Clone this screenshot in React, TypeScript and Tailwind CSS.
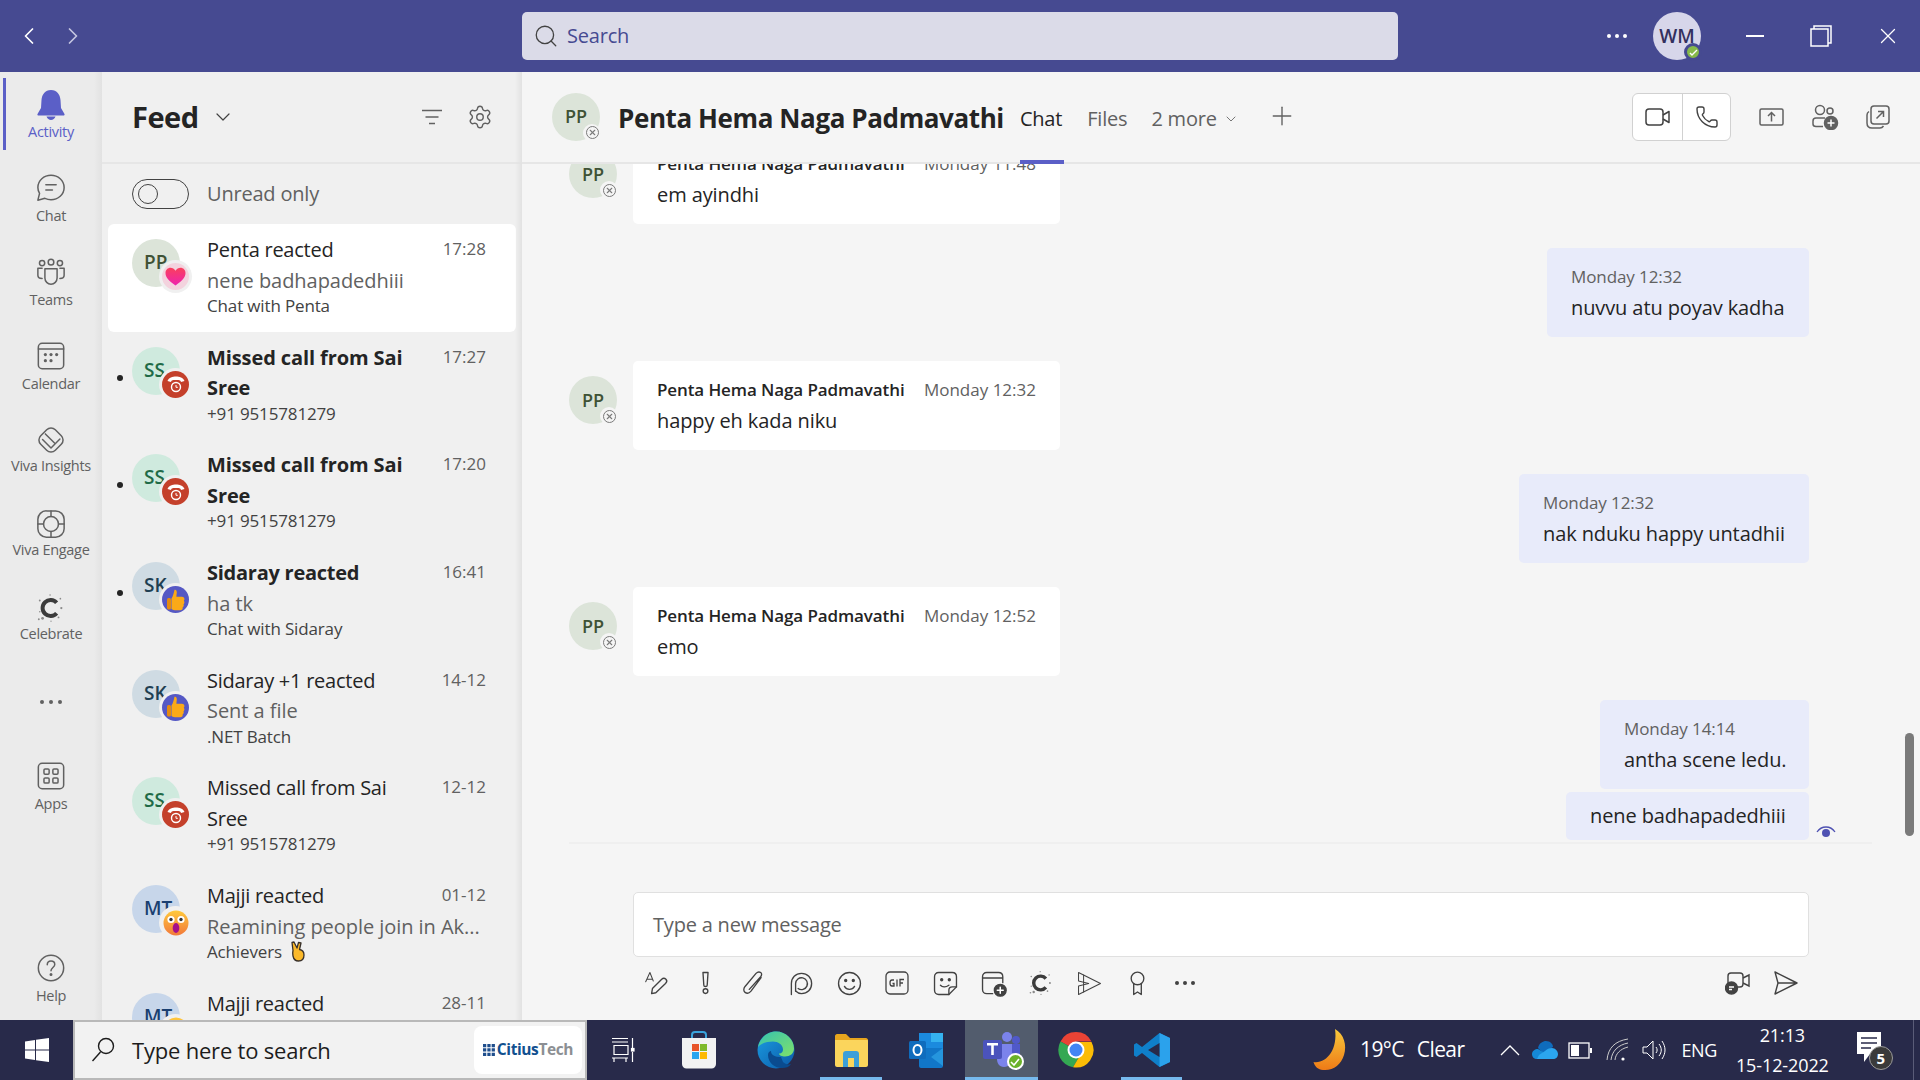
import type { ReactNode } from "react";
import { ChevronDown, ChevronLeft, ChevronRight, Phone, Plus, Search, Settings, X } from "lucide-react";

type FeedItem = {
  initials: string;
  tone: string;
  initialsTone: string;
  badge: "heart" | "call" | "like" | "wow";
  title: ReactNode;
  preview?: string;
  meta?: ReactNode;
  time: string;
  unread?: boolean;
  active?: boolean;
};

const Icon = ({ size = 30, children, className }: { size?: number; children: ReactNode; className?: string }) => (
  <svg width={size} height={size} viewBox="0 0 32 32" fill="none" stroke="currentColor" strokeWidth={1.6} strokeLinecap="round" strokeLinejoin="round" className={className}>
    {children}
  </svg>
);

const Heart = () => (
  <div className="flex h-full w-full items-center justify-center rounded-full bg-[#f3d3de]">
    <svg width="21" height="19" viewBox="0 0 21 19"><defs><linearGradient id="hg" x1="0" y1="0" x2="0" y2="1"><stop offset="0" stopColor="#f9405c" /><stop offset="1" stopColor="#ee22b0" /></linearGradient></defs><path d="M10.500 18.500C4 14 .5 10.500.5 6 .5 3 2.800.8 5.500.8c2 0 3.800 1 5 3 1.200-2 3-3 5-3 2.700 0 5 2.200 5 5.200 0 4.500-3.500 8-10 12.500z" fill="url(#hg)" /></svg>
  </div>
);

const CallBadge = () => (
  <div className="flex h-full w-full items-center justify-center rounded-full bg-[#c4402b]">
    <svg width="20" height="20" viewBox="0 0 20 20" fill="none" stroke="#fff"><path d="M1.500 7C3 3.500 6.500 2.500 10 2.500S17 3.500 18.500 7l-3.500 1c-.5-1.500-.5-2-5-2s-4.500.5-5 2z" fill="#fff" stroke="none" /><circle cx="10" cy="13" r="4.500" strokeWidth="1.400" /><path d="M10 11v2.300h1.800" strokeWidth="1" /></svg>
  </div>
);

const Like = () => (
  <div className="flex h-full w-full items-center justify-center rounded-full bg-[#5558c4]">
    <svg width="18" height="22" viewBox="0 0 18 22"><path d="M7.500.8c1.700-.5 2.500 1 2.300 3-.1 1.500-.4 2.700-.4 4h5.600c2.700 0 3 3 1.800 4 1 1.200.7 2.800-.3 3.500.6 1.200.1 2.500-.8 3 .3 1.700-.7 3-2.500 3H8c-2 0-3-.9-3.500-1.200V9.500C6 7.500 6.800 4 7.500.8z" fill="#fba918" /><rect x="0" y="9" width="4" height="11.500" rx="1.500" fill="#e58a0f" /></svg>
  </div>
);

const Wow = () => (
  <svg width="26" height="26" viewBox="0 0 26 26"><defs><linearGradient id="wg" x1="0" y1="0" x2="0" y2="1"><stop offset="0" stopColor="#ffc93c" /><stop offset="1" stopColor="#f2793a" /></linearGradient></defs><circle cx="13" cy="13" r="12.500" fill="url(#wg)" /><ellipse cx="8" cy="9.500" rx="3.600" ry="3.600" fill="#fff" /><ellipse cx="18" cy="9.500" rx="3.600" ry="3.600" fill="#fff" /><circle cx="8" cy="9.500" r="1.700" fill="#333" /><circle cx="18" cy="9.500" r="1.700" fill="#333" /><ellipse cx="13" cy="18" rx="3.300" ry="5" fill="#a5108a" /></svg>
);

const Fingers = () => (
  <svg width="15" height="21" viewBox="0 0 15 21" className="ml-[8px]"><path d="M2 1.500 4 1l3 6 1.500-5.500L11 2 9.500 8.500c3 .5 4.500 2 4.500 5.500 0 4-2 6-5.500 6C5 20 3.500 17.500 3 15c-.4-2-.6-3 0-5.500z" fill="#fbb92a" stroke="#38302a" strokeWidth="1.300" strokeLinejoin="round" /></svg>
);

const missedBold = <b className="font-bold tracking-[-0.1px]">Missed call from Sai<br />Sree</b>;

const feedItems: FeedItem[] = [
  { initials: "PP", tone: "bg-[#dce4d9]", initialsTone: "text-[#3f5235]", badge: "heart", title: "Penta reacted", preview: "nene badhapadedhiii", meta: "Chat with Penta", time: "17:28", active: true },
  { initials: "SS", tone: "bg-[#cfeade]", initialsTone: "text-[#1f6b47]", badge: "call", title: missedBold, meta: "+91 9515781279", time: "17:27", unread: true },
  { initials: "SS", tone: "bg-[#cfeade]", initialsTone: "text-[#1f6b47]", badge: "call", title: missedBold, meta: "+91 9515781279", time: "17:20", unread: true },
  { initials: "SK", tone: "bg-[#cfdbe3]", initialsTone: "text-[#1f3f52]", badge: "like", title: <b className="font-bold">Sidaray reacted</b>, preview: "ha tk", meta: "Chat with Sidaray", time: "16:41", unread: true },
  { initials: "SK", tone: "bg-[#cfdbe3]", initialsTone: "text-[#1f3f52]", badge: "like", title: "Sidaray +1 reacted", preview: "Sent a file", meta: ".NET Batch", time: "14-12" },
  { initials: "SS", tone: "bg-[#cfeade]", initialsTone: "text-[#1f6b47]", badge: "call", title: <>Missed call from Sai<br />Sree</>, meta: "+91 9515781279", time: "12-12" },
  { initials: "MT", tone: "bg-[#c7d6ea]", initialsTone: "text-[#1a3f70]", badge: "wow", title: "Majji reacted", preview: "Reamining people join in Ak...", meta: <span className="flex items-center">Achievers<Fingers /></span>, time: "01-12" },
  { initials: "MT", tone: "bg-[#c7d6ea]", initialsTone: "text-[#1a3f70]", badge: "wow", title: "Majji reacted", time: "28-11" },
];

const FeedRow = ({ item }: { item: FeedItem }) => (
  <div className={`flex h-[107.7px] w-[408px] shrink-0 rounded-[6px] ${item.active ? "bg-white" : ""}`}>
    <div className="flex w-[24px] shrink-0 justify-center pt-[43px]">
      {item.unread && <span className="h-[6px] w-[6px] rounded-full bg-[#242424]" />}
    </div>
    <div className="relative mt-[15px] h-[48px] w-[48px] shrink-0">
      <div className={`h-[48px] w-[48px] rounded-full pl-[12px] pt-[8px] text-[19px] leading-[30px] font-semibold ${item.tone} ${item.initialsTone}`}>{item.initials}</div>
      <div className="absolute left-[27px] top-[21px] flex h-[33px] w-[33px] items-center justify-center rounded-full bg-[#f0f0f0] p-[3px]">
        {item.badge === "heart" && <Heart />}
        {item.badge === "call" && <CallBadge />}
        {item.badge === "like" && <Like />}
        {item.badge === "wow" && <Wow />}
      </div>
    </div>
    <div className="ml-[27px] min-w-0 flex-1 pt-[11px] text-[20px] leading-[30.500px] tracking-[-0.25px]">
      <div className="whitespace-nowrap text-[#242424]">{item.title}</div>
      {item.preview && <div className="whitespace-nowrap tracking-[-0.05px] text-[#616161]">{item.preview}</div>}
      {item.meta && <div className="-mt-[2px] whitespace-nowrap text-[17px] leading-[23px] tracking-[-0.15px] text-[#424242]">{item.meta}</div>}
    </div>
    <div className="shrink-0 whitespace-nowrap pr-[30px] pt-[12px] text-[17px] leading-[26px] text-[#616161]">{item.time}</div>
  </div>
);

const Rail = ({ label, active, tight, children, className = "h-[84px]" }: { label: string; active?: boolean; tight?: boolean; children: ReactNode; className?: string }) => (
  <div className={`relative flex w-full flex-col items-center pt-[17px] ${className} ${active ? "text-[#5b5fc7]" : "text-[#616161]"}`}>
    {active && <span className="absolute left-[3px] top-[6px] h-[72px] w-[3px] bg-[#5b5fc7]" />}
    <div className="h-[30px]">{children}</div>
    <span className={`whitespace-nowrap text-[14.500px] leading-[20px] tracking-[-0.3px] ${tight ? "mt-[1px]" : "mt-[3px]"}`}>{label}</span>
  </div>
);

const CelebrateC = ({ size = 30 }: { size?: number }) => (
  <svg width={size} height={size} viewBox="0 0 32 32" fill="none">
    <path d="M22 10.500a8.500 8.500 0 1 0 0 11" stroke="#3b3b3b" strokeWidth="4.200" />
    <g fill="#8a8a8a"><circle cx="4" cy="8" r="1" /><circle cx="7" cy="27" r="1.500" /><circle cx="26" cy="6" r=".9" /><circle cx="27" cy="16" r="1.200" /><circle cx="24" cy="26" r="1" /><circle cx="4" cy="20" r=".8" /><circle cx="15" cy="2" r=".8" /><circle cx="3" cy="28" r="1" /><circle cx="16" cy="30" r=".7" /></g>
  </svg>
);

const EdgeShade = ({ width }: { width: string }) => (
  <div className={`pointer-events-none absolute inset-y-0 right-0 bg-linear-to-r from-transparent to-[#e2e2e2] ${width}`} />
);

const Sidebar = () => (
  <aside className="relative flex h-full w-[102px] shrink-0 flex-col bg-[#ebebeb]">
    <EdgeShade width="w-[8px]" />
    <Rail label="Activity" active>
      <svg width="30" height="32" viewBox="0 0 30 32" fill="currentColor"><path d="M15 1C9 1 6 5.500 5.500 11l-.5 8-3.500 6c-.4.900.2 1.500 1 1.500h25c.8 0 1.400-.6 1-1.500L25 19l-.5-8C24 5.500 21 1 15 1zM10.500 27.500c.8 2 2.500 3.500 4.500 3.500s3.700-1.500 4.500-3.500z" /></svg>
    </Rail>
    <Rail label="Chat">
      <Icon><path d="M16 2.500C8.500 2.500 2 8 2 15.500c0 2.500.7 4.500 1.800 6.300L2 29l7.500-2c1.900.9 4.300 1.500 6.500 1.500 7.500 0 14-5.500 14-13s-6.500-13-14-13z" /><path d="M10.500 12.500h11M10.500 18h7" /></Icon>
    </Rail>
    <Rail label="Teams">
      <Icon><circle cx="16" cy="5.500" r="3" /><circle cx="6.500" cy="6.500" r="2.800" /><circle cx="25.500" cy="6.500" r="2.800" /><path d="M9.500 12.500h13v10a6.500 6.500 0 0 1-13 0z" /><path d="M6.500 12H2v7.500c0 2 1.500 3.500 4.500 3.500M25.500 12H30v7.500c0 2-1.500 3.500-4.500 3.500" /></Icon>
    </Rail>
    <Rail label="Calendar">
      <Icon><rect x="2.500" y="2.500" width="27" height="27" rx="4" /><path d="M2.500 8.500h27" /><g fill="currentColor" stroke="none"><circle cx="10" cy="14.500" r="1.700" /><circle cx="16" cy="14.500" r="1.700" /><circle cx="22" cy="14.500" r="1.700" /><circle cx="10" cy="21" r="1.700" /><circle cx="16" cy="21" r="1.700" /></g></Icon>
    </Rail>
    <Rail label="Viva Insights" tight>
      <Icon><rect x="5" y="5" width="22" height="22" rx="6.500" transform="rotate(45 16 16)" /><path d="M7 15.500l9 9 9.500-9.500M10 9.500l9.500 9.500" /></Icon>
    </Rail>
    <Rail label="Viva Engage" tight>
      <Icon><rect x="2" y="2" width="28" height="28" rx="9" /><circle cx="16" cy="16" r="8" /><path d="M16 2v6M16 24v6M2 16h6M24 16h6" /></Icon>
    </Rail>
    <Rail label="Celebrate" tight><CelebrateC /></Rail>
    <div className="flex h-[72px] shrink-0 items-center justify-center gap-[5px] pt-[12px]">
      <span className="h-[4px] w-[4px] rounded-full bg-[#616161]" /><span className="h-[4px] w-[4px] rounded-full bg-[#616161]" /><span className="h-[4px] w-[4px] rounded-full bg-[#616161]" />
    </div>
    <Rail label="Apps" className="mt-[12px] h-[84px]">
      <Icon><rect x="2.500" y="2.500" width="27" height="27" rx="4" /><rect x="8.500" y="8.500" width="5.500" height="5.500" rx="1.200" /><rect x="18" y="8.500" width="5.500" height="5.500" rx="1.200" /><rect x="8.500" y="18" width="5.500" height="5.500" rx="1.200" /><rect x="18" y="18" width="5.500" height="5.500" rx="1.200" /></Icon>
    </Rail>
    <div className="mt-auto">
      <Rail label="Help" className="h-[84px]">
        <Icon><circle cx="16" cy="16" r="13.500" /><path d="M12 12.500c0-2.500 1.800-4 4-4s4 1.500 4 3.700c0 3.300-4 3.300-4 6.800" /><circle cx="16" cy="23" r=".8" fill="currentColor" /></Icon>
      </Rail>
    </div>
  </aside>
);

const FeedPanel = () => (
  <section className="relative flex h-full w-[420px] shrink-0 flex-col bg-[#f0f0f0]">
    <div className="flex h-[92px] shrink-0 items-center border-b-2 border-[#e6e6e6] pl-[30px] pr-[29px]">
      <span className="text-[29px] font-bold tracking-[-0.5px] text-[#242424]">Feed</span>
      <ChevronDown size={24} strokeWidth={1.200} className="ml-[12px] text-[#424242]" />
      <svg width="22" height="16" viewBox="0 0 22 16" fill="none" stroke="#616161" strokeWidth="1.500" className="ml-auto mr-[24px]"><path d="M1 1.500h20M4.500 8h13M8 14.500h6" /></svg>
      <Settings size={26} strokeWidth={1.300} className="text-[#616161]" />
    </div>
    <div className="flex h-[60px] shrink-0 items-center pl-[30px]">
      <div className="flex h-[30px] w-[57px] items-center rounded-full border border-[#424242] pl-[5px]">
        <span className="h-[20px] w-[20px] rounded-full border border-[#424242]" />
      </div>
      <span className="ml-[18px] text-[20px] tracking-[-0.2px] text-[#616161]">Unread only</span>
    </div>
    <div className="min-h-0 flex-1 overflow-hidden pl-[6px]">
      {feedItems.map((item, index) => <FeedRow key={index} item={item} />)}
    </div>
    <EdgeShade width="w-[7px]" />
  </section>
);

const StatusAvatar = () => (
  <div className="relative h-[48px] w-[48px] shrink-0">
    <div className="flex h-[48px] w-[48px] items-center justify-center rounded-full bg-[#dce4d9] text-[18px] font-semibold text-[#3f5235]">PP</div>
    <div className="absolute -bottom-[1px] -right-[1px] flex h-[18px] w-[18px] items-center justify-center rounded-full bg-[#f5f5f5]">
      <div className="flex h-[13px] w-[13px] items-center justify-center rounded-full border border-[#7a7a7a]"><X size={9} strokeWidth={3} className="text-[#7a7a7a]" /></div>
    </div>
  </div>
);

const LeftMessage = ({ time, text }: { time: string; text: string }) => (
  <div className="flex shrink-0 gap-[16px] pl-[47px]">
    <div className="pt-[15px]"><StatusAvatar /></div>
    <div className="h-[89px] w-[427px] shrink-0 rounded-[5px] bg-white px-[24px] pt-[15px]">
      <div className="flex justify-between whitespace-nowrap text-[17px] leading-[28px]">
        <span className="font-semibold tracking-[-0.1px] text-[#242424]">Penta Hema Naga Padmavathi</span>
        <span className="text-[#616161]">{time}</span>
      </div>
      <div className="text-[20px] leading-[33px] tracking-[-0.1px] text-[#242424]">{text}</div>
    </div>
  </div>
);

const RightMessage = ({ time, text, width }: { time: string; text: string; width: string }) => (
  <div className="flex shrink-0 justify-end pr-[111px]">
    <div className={`h-[89px] rounded-[5px] bg-[#e8ebfa] pl-[24px] pt-[15px] ${width}`}>
      <div className="whitespace-nowrap text-[17px] leading-[28px] tracking-[-0.1px] text-[#616161]">{time}</div>
      <div className="whitespace-nowrap text-[20px] leading-[33px] tracking-[-0.1px] text-[#242424]">{text}</div>
    </div>
  </div>
);

const ChatHeader = () => (
  <header className="flex h-[92px] shrink-0 items-center border-b-2 border-[#e6e6e6] pl-[30px] pr-[27px]">
    <div className="-mt-[1px]"><StatusAvatar /></div>
    <h1 className="ml-[18px] whitespace-nowrap pt-[2px] text-[26px] font-bold tracking-[-0.4px] text-[#242424]">Penta Hema Naga Padmavathi</h1>
    <div className="relative ml-[16px] flex h-full items-center pt-[4px] text-[20px] text-[#242424]">
      <span className="tracking-[-0.2px]">Chat</span>
      <span className="absolute bottom-[-2px] left-0 h-[4px] w-[44px] bg-[#5b5fc7]" />
    </div>
    <span className="ml-[25px] pt-[4px] text-[20px] tracking-[-0.2px] text-[#616161]">Files</span>
    <span className="ml-[24px] flex items-center pt-[4px] text-[20px] tracking-[-0.2px] text-[#616161]">2 more<ChevronDown size={16} strokeWidth={1.300} className="ml-[6px]" /></span>
    <Plus size={30} strokeWidth={1.100} className="ml-[28px] -mt-[2px] text-[#616161]" />
    <div className="ml-auto flex h-[48px] w-[99px] rounded-[6px] border border-[#d1d1d1] bg-white text-[#424242]">
      <div className="flex w-[50px] items-center justify-center border-r border-[#d1d1d1]">
        <svg width="26" height="20" viewBox="0 0 26 20" fill="none" stroke="currentColor" strokeWidth="1.500"><rect x="1" y="2" width="17" height="16" rx="3" /><path d="M18 8l6-3.500v11L18 12" strokeLinejoin="round" /></svg>
      </div>
      <div className="flex flex-1 items-center justify-center"><Phone size={24} strokeWidth={1.400} /></div>
    </div>
    <svg width="26" height="20" viewBox="0 0 26 20" fill="none" stroke="#616161" strokeWidth="1.500" className="ml-[28px]"><rect x="1" y="2" width="23" height="16" rx="1.500" /><path d="M12.500 14.500V6M9 9l3.500-3.500L16 9" /></svg>
    <svg width="28" height="26" viewBox="0 0 28 26" fill="none" stroke="#616161" strokeWidth="1.500" className="ml-[26px]"><circle cx="9" cy="6" r="4.500" /><circle cx="19" cy="7" r="3" /><path d="M2 20v-3c0-2 1.500-3 3-3h9M2 20c0 1.500 1 2.500 3 2.500h7" /><circle cx="20" cy="19" r="6.500" fill="#616161" /><path d="M20 15.500v7M16.500 19h7" stroke="#fff" /></svg>
    <svg width="24" height="24" viewBox="0 0 24 24" fill="none" stroke="#616161" strokeWidth="1.500" className="ml-[27px] mr-[3px]"><path d="M3 6.500C1.500 7.500 1 8.500 1 10v8c0 3 2 5 5 5h8c1.500 0 2.500-.5 3.500-2" /><rect x="5" y="1" width="18" height="18" rx="3" /><path d="M10.500 13.500l7-7M12 6.500h5.500V12" /></svg>
  </header>
);

const toolIcons: ReactNode[] = [
  <Icon size={27} key="format"><path d="M2 14 7 3l4 10M3.500 11h6" strokeWidth="1.200" /><path d="M9 28l1-6L21 11c1.500-1.500 3.500-1.500 5 0s1 3.500-.5 5L14 27z" /></Icon>,
  <Icon size={27} key="alert"><path d="M13 3h6l-1 15c0 2-4 2-4 0z" /><circle cx="16" cy="25" r="2.800" /></Icon>,
  <Icon size={27} key="attach"><path d="M25 9 13 25c-2 2.500-5 3-7 1.500S4 22 6 19.500L19 4c2-2 4-2 5.500-1s1.500 3 0 5L11 23" /></Icon>,
  <Icon size={27} key="loop"><path d="M4 29V16C4 9 9 4 16 4s12 5 12 12-5 12-12 12c-3 0-5-1-7-3" /><path d="M9 25V16a7 7 0 1 1 3 6" /></Icon>,
  <Icon size={27} key="smile"><circle cx="16" cy="16" r="13" /><circle cx="11.500" cy="12.500" r="1.200" fill="currentColor" /><circle cx="20.500" cy="12.500" r="1.200" fill="currentColor" /><path d="M10 19.500c1.500 2.500 3.500 3.500 6 3.500s4.500-1 6-3.500" /></Icon>,
  <svg width="24" height="24" viewBox="0 0 24 24" fill="none" key="gif"><rect x="1" y="1" width="22" height="22" rx="4" stroke="currentColor" strokeWidth="1.300" /><path d="M9 9H7c-1.500 0-2 1-2 3s.5 3 2 3h2v-2.500H7.500M12 8.500v7M15 15.500v-7h4M15 12h3" stroke="currentColor" strokeWidth="1.300" /></svg>,
  <Icon size={27} key="sticker"><path d="M20 29H8c-3 0-5-2-5-5V8c0-3 2-5 5-5h16c3 0 5 2 5 5v12z" /><path d="M29 20h-5c-2.500 0-4 1.500-4 4v5" /><circle cx="11.500" cy="11.500" r="1.200" fill="currentColor" /><circle cx="20.500" cy="11.500" r="1.200" fill="currentColor" /><path d="M10 18c2 2 6 3 10 0" /></Icon>,
  <Icon size={27} key="meet"><path d="M15 28H8c-3 0-5-2-5-5V8c0-3 2-5 5-5h14c3 0 5 2 5 5v7M3 9.500h24" /><circle cx="24" cy="24" r="7" fill="currentColor" /><path d="M24 20.500v7M20.500 24h7" stroke="#fff" strokeWidth="1.800" /></Icon>,
  <CelebrateC size={26} key="celebrate" />,
  <Icon size={27} key="stream"><path d="M3 3l26 13L3 29V19l12-3L3 13z" strokeWidth="1.200" /><path d="M9 6v20" strokeWidth="1.200" /></Icon>,
  <Icon size={27} key="praise"><circle cx="16" cy="10" r="7.500" /><path d="M11.500 16v13l4.500-3 4.500 3V16" /></Icon>,
];

const Composer = () => (
  <div className="shrink-0 pl-[111px] pr-[111px] pt-[48px]">
    <div className="flex h-[65px] items-center rounded-[5px] border border-[#e0e0e0] bg-white pl-[19px] text-[20px] tracking-[-0.2px] text-[#616161]">Type a new message</div>
    <div className="flex h-[50px] items-center pt-[2px] text-[#424242]">
      {toolIcons.map((icon, index) => (
        <div key={index} className="flex w-[48px] shrink-0 justify-center">{icon}</div>
      ))}
      <div className="flex w-[48px] justify-center gap-[4px]">
        <span className="h-[4px] w-[4px] rounded-full bg-[#424242]" /><span className="h-[4px] w-[4px] rounded-full bg-[#424242]" /><span className="h-[4px] w-[4px] rounded-full bg-[#424242]" />
      </div>
      <svg width="26" height="24" viewBox="0 0 26 24" fill="none" stroke="#424242" strokeWidth="1.400" className="ml-auto"><rect x="3" y="2" width="15" height="14" rx="3" /><path d="M18 7l6-3v11l-6-3" /><circle cx="6.500" cy="17" r="6" fill="#424242" /><path d="M4 16h5M4 18.500h3" stroke="#fff" /></svg>
      <svg width="26" height="26" viewBox="0 0 26 26" fill="none" stroke="#424242" strokeWidth="1.400" strokeLinejoin="round" className="ml-[22px] mr-[10px]"><path d="M2 2l22 11L2 24l3-11zM5 13h19" /></svg>
    </div>
  </div>
);

const ChatPanel = () => (
  <main className="relative flex h-full min-w-0 flex-1 flex-col bg-[#f5f5f5]">
    <ChatHeader />
    <div className="flex min-h-0 flex-1 flex-col justify-end gap-[24px] overflow-hidden">
      <LeftMessage time="Monday 11:48" text="em ayindhi" />
      <RightMessage time="Monday 12:32" text="nuvvu atu poyav kadha" width="w-[262px]" />
      <LeftMessage time="Monday 12:32" text="happy eh kada niku" />
      <RightMessage time="Monday 12:32" text="nak nduku happy untadhii" width="w-[290px]" />
      <LeftMessage time="Monday 12:52" text="emo" />
      <div className="flex shrink-0 flex-col items-end gap-[3px] pr-[111px]">
        <div className="h-[89px] w-[209px] rounded-[5px] bg-[#e8ebfa] pl-[24px] pt-[15px]">
          <div className="whitespace-nowrap text-[17px] leading-[28px] tracking-[-0.1px] text-[#616161]">Monday 14:14</div>
          <div className="whitespace-nowrap text-[20px] leading-[33px] tracking-[-0.1px] text-[#242424]">antha scene ledu.</div>
        </div>
        <div className="relative flex h-[48px] w-[243px] items-center rounded-[5px] bg-[#e8ebfa] pl-[24px]">
          <span className="whitespace-nowrap text-[20px] tracking-[-0.1px] text-[#242424]">nene badhapadedhiii</span>
          <svg width="20" height="14" viewBox="0 0 20 14" fill="none" className="absolute -right-[27px] bottom-[1px]"><path d="M1 7c2-3 5-5 9-5s7 2 9 5" stroke="#4f52b2" strokeWidth="1.300" /><circle cx="10" cy="8" r="4" fill="#4f52b2" /></svg>
        </div>
      </div>
      <div className="-mt-[22px] ml-[47px] mr-[48px] h-[2px] shrink-0 bg-[#efefef]" />
    </div>
    <Composer />
    <div className="h-[13px] shrink-0" />
    <div className="absolute bottom-[184px] right-[6px] h-[103px] w-[9px] rounded-full bg-[#7a7a7a]" />
  </main>
);

const TopBar = () => (
  <div className="flex h-[72px] shrink-0 items-center bg-[#464a91] text-white">
    <div className="flex w-[522px] shrink-0 items-center pl-[15px]">
      <ChevronLeft size={28} strokeWidth={1.500} />
      <ChevronRight size={28} strokeWidth={1.500} className="ml-[16px] text-[#c5c6e0]" />
    </div>
    <div className="flex h-[48px] w-[876px] shrink-0 items-center rounded-[5px] bg-[#dbdbe8] pl-[11px]">
      <Search size={26} strokeWidth={1.200} className="text-[#424242]" />
      <span className="ml-[8px] text-[20px] tracking-[-0.2px] text-[#464a91]">Search</span>
    </div>
    <div className="flex flex-1 items-center">
      <div className="ml-[209px] flex gap-[4px]">
        <span className="h-[4px] w-[4px] rounded-full bg-white" /><span className="h-[4px] w-[4px] rounded-full bg-white" /><span className="h-[4px] w-[4px] rounded-full bg-white" />
      </div>
      <div className="relative ml-[26px] h-[48px] w-[48px]">
        <div className="flex h-[48px] w-[48px] items-center justify-center rounded-full bg-[#d7d6ea] text-[19px] font-semibold text-[#33305e]">WM</div>
        <div className="absolute -bottom-[1px] -right-[1px] flex h-[18px] w-[18px] items-center justify-center rounded-full border-[3px] border-[#464a91] bg-[#86b94a]">
          <svg width="9" height="7" viewBox="0 0 9 7" fill="none" stroke="#fff" strokeWidth="1.400"><path d="M1 4l2 2 5-5" /></svg>
        </div>
      </div>
      <span className="ml-[45px] h-[1.500px] w-[18px] bg-white" />
      <svg width="22" height="22" viewBox="0 0 22 22" fill="none" stroke="#fff" strokeWidth="1.500" className="ml-[46px]"><rect x="1" y="4" width="17" height="17" /><path d="M4 4V1h17v17h-3" /></svg>
      <X size={26} strokeWidth={1.200} className="ml-[43px]" />
    </div>
  </div>
);

const TaskCell = ({ width, active, underline, children }: { width: string; active?: boolean; underline?: boolean; children: ReactNode }) => (
  <div className={`relative flex h-full shrink-0 items-center justify-center ${width} ${active ? "bg-[#525c6d]" : ""}`}>
    {children}
    {underline && <span className={`absolute bottom-0 h-[3px] bg-[#76b9ed] ${active ? "inset-x-0" : "inset-x-[7px]"}`} />}
  </div>
);

const Taskbar = () => (
  <footer className="flex h-[60px] shrink-0 items-stretch bg-[#282a4a] text-white">
    <div className="flex w-[73px] shrink-0 items-center justify-center">
      <svg width="24" height="24" viewBox="0 0 24 24" fill="#fff"><path d="M0 3.500 10 2v9.500H0zM11 1.800 24 0v11.500H11zM0 12.500h10V22L0 20.500zM11 12.500h13V24l-13-1.800z" /></svg>
    </div>
    <div className="flex w-[514px] shrink-0 items-center border-[2px] border-[#b9b9b9] bg-[#f2f2f2] pl-[16px] text-[#1c1c1c]">
      <svg width="24" height="26" viewBox="0 0 24 26" fill="none" stroke="#1c1c1c" strokeWidth="1.400"><circle cx="15" cy="9" r="7.500" /><path d="M9.500 15 1.500 24" /></svg>
      <span className="ml-[17px] pt-[1px] text-[22px] tracking-[-0.2px]">Type here to search</span>
      <div className="ml-auto mr-[3px] flex h-[48px] w-[108px] items-center justify-center rounded-[8px] bg-white">
        <svg width="13" height="13" viewBox="0 0 12 12" fill="#1f4e8c"><path d="M0 0h3v3H0zM4 0h3v3H4zM8 0h3v3H8zM0 4h3v3H0zM4 4h3v3H4zM8 4h3v3H8zM0 8h3v3H0zM4 8h3v3H4zM8 8h3v3H8z" /></svg>
        <span className="ml-[1px] text-[15.500px] font-bold tracking-[-0.4px] text-[#11508f]">Citius<span className="text-[#8c8f93]">Tech</span></span>
      </div>
    </div>
    <TaskCell width="w-[73px]">
      <svg width="26" height="26" viewBox="0 0 26 26" fill="none" stroke="#fff" strokeWidth="1.200"><path d="M1 1.500h16M1 5h16M3 8.500h14v9H3zM1 21h16M3 21v4M15 21v4M21.500 1v10M21.500 15v10" /><rect x="20.500" y="11.500" width="2.500" height="2.500" fill="#fff" /></svg>
    </TaskCell>
    <TaskCell width="w-[78px]">
      <svg width="36" height="38" viewBox="0 0 36 38"><path d="M11 8V4c0-1.500 1-3 3-3h8c2 0 3 1.500 3 3v4" fill="none" stroke="#3aa4dc" strokeWidth="2" /><path d="M1 7h34v26c0 2.500-2 4.500-4.500 4.500h-25C3 37.500 1 35.500 1 33z" fill="#f2f2f2" /><rect x="11" y="13" width="7" height="7" fill="#e8542a" /><rect x="19" y="13" width="7" height="7" fill="#7fba2b" /><rect x="11" y="21" width="7" height="7" fill="#2aa4f0" /><rect x="19" y="21" width="7" height="7" fill="#fdb900" /></svg>
    </TaskCell>
    <TaskCell width="w-[75px]">
      <svg width="38" height="38" viewBox="0 0 38 38"><defs><linearGradient id="e1" x1="0" y1="0" x2="1" y2="1"><stop offset="0" stopColor="#36c3b0" /><stop offset="1" stopColor="#7fe06a" /></linearGradient><linearGradient id="e2" x1="0" y1="0" x2="1" y2="1"><stop offset="0" stopColor="#1b9de2" /><stop offset="1" stopColor="#0b5aa8" /></linearGradient></defs><circle cx="19" cy="19" r="18.500" fill="url(#e2)" /><path d="M1 16C3 6 11 .5 19 .5c10 0 18 8 18 17 0 5-4 8-9 8-3 0-6-1-6-3 3 0 4-2 4-4 0-5-5-8-10-8C10 10.500 4 12 1 16z" fill="url(#e1)" /><path d="M24 26c-6 0-10-2-10-6-1 0-3 1-3 4 0 7 6 13 14 13 4 0 7-1 9-4-3 1-6 0-8-2z" fill="#0a4b8f" /></svg>
    </TaskCell>
    <TaskCell width="w-[76px]" underline>
      <svg width="34" height="34" viewBox="0 0 34 34"><path d="M1 3c0-1 1-2 2-2h9l4 4h16c1 0 2 1 2 2v4H1z" fill="#e7a51e" /><path d="M1 7h32c.6 0 1 .4 1 1v24c0 1-1 2-2 2H3c-1 0-2-1-2-2z" fill="#fbd55c" /><path d="M9 34V21c0-2 1-3 3-3h10c2 0 3 1 3 3v13h-5v-9h-6v9z" fill="#3c9fd8" /></svg>
    </TaskCell>
    <TaskCell width="w-[76px]">
      <svg width="36" height="36" viewBox="0 0 36 36"><rect x="10" y="1" width="24" height="17" fill="#1b8ade" /><rect x="22" y="1" width="12" height="9" fill="#35b2ef" /><path d="M10 16h24v18c0 1-1 2-2 2H12c-1 0-2-1-2-2z" fill="#1176c8" /><path d="M10 16l12 9 12-9v18L22 25z" fill="#2ea2e6" opacity=".7" /><rect x="0" y="9" width="17" height="18" rx="1.500" fill="#0f6cbd" /><ellipse cx="8.500" cy="18" rx="4" ry="5" fill="none" stroke="#fff" strokeWidth="2" /></svg>
    </TaskCell>
    <TaskCell width="w-[73px]" active underline>
      <div className="relative h-[36px] w-[38px]">
        <svg width="38" height="36" viewBox="0 0 38 36"><circle cx="24" cy="5" r="5" fill="#7b83eb" /><circle cx="33" cy="8" r="4" fill="#5059c9" /><path d="M14 12h15v14c0 5-3 9-8 9s-7-4-7-8z" fill="#7b83eb" /><path d="M29 12h8v12c0 4-3 6-8 6z" fill="#5059c9" /><rect x="0" y="8" width="19" height="19" rx="2" fill="#4b53bc" /><rect x="4" y="11" width="11" height="2.500" fill="#fff" /><rect x="8.200" y="12" width="2.600" height="11" fill="#fff" /></svg>
        <div className="absolute -bottom-[2px] -right-[3px] flex h-[17px] w-[17px] items-center justify-center rounded-full border-2 border-white bg-[#6ab22a]">
          <svg width="10" height="8" viewBox="0 0 10 8" fill="none" stroke="#fff" strokeWidth="1.600"><path d="M1 4l3 3 5-6" /></svg>
        </div>
      </div>
    </TaskCell>
    <TaskCell width="w-[76px]">
      <svg width="36" height="36" viewBox="0 0 36 36"><path d="M18 18 2.500 9.500A17.500 17.500 0 0 1 33.500 9.500H18z" fill="#ea4335" /><path d="M18 18 2.500 9.500A17.500 17.500 0 0 0 15 35.300L23 22z" fill="#34a853" /><path d="M18 10h15.500A17.500 17.500 0 0 1 15 35.300L24 20z" fill="#fbbc05" /><circle cx="18" cy="18" r="8.500" fill="#fff" /><circle cx="18" cy="18" r="6.500" fill="#4285f4" /></svg>
    </TaskCell>
    <TaskCell width="w-[75px]" underline>
      <svg width="36" height="36" viewBox="0 0 36 36"><path d="M25.500 1 36 6v24l-10.500 5L8 21 2.500 25 0 23.500v-11L2.500 11 8 15z" fill="#0f7fca" /><path d="M25.500 1 36 6v24l-10.500 5z" fill="#2ba2ec" /><path d="M25.500 11 14 18l11.500 7z" fill="#282a4a" /></svg>
    </TaskCell>
    <div className="flex min-w-0 flex-1 items-center">
      <svg width="34" height="44" viewBox="0 0 34 44" className="ml-[124px]"><defs><linearGradient id="mo" x1="0" y1="0" x2="0" y2="1"><stop offset="0" stopColor="#f8c93c" /><stop offset="1" stopColor="#ee7a16" /></linearGradient></defs><path d="M22 1c9 5 12 16 9 26-3 10-11 16-21 15C5 41.500 2 39 .5 34 13 36 25 22 22 1z" fill="url(#mo)" /></svg>
      <span className="ml-[13px] whitespace-nowrap text-[21px] tracking-[-0.6px]">19°C</span>
      <span className="ml-[13px] whitespace-nowrap text-[21px] tracking-[-0.6px]">Clear</span>
      <svg width="20" height="11" viewBox="0 0 20 11" fill="none" stroke="#fff" strokeWidth="1.300" className="ml-[36px]"><path d="M1 10l9-9 9 9" /></svg>
      <svg width="26" height="18" viewBox="0 0 26 18" className="ml-[12px]"><path d="M6 7c1-5 5-7 8-7 4 0 7 3 7 6l-10 6z" fill="#0f6cbd" /><path d="M5 18c-3 0-5-2-5-5s3-5 6-5l5 3 4 7z" fill="#1588d6" /><path d="M5 18h16c3 0 5-2 5-5s-3-6-6-6c-3 0-5 1-7 3l-6 4z" fill="#2ba5ee" /></svg>
      <svg width="24" height="17" viewBox="0 0 24 17" fill="none" className="ml-[10px]"><rect x="1" y="1" width="20" height="15" stroke="#fff" strokeWidth="1.300" /><rect x="3" y="3" width="8" height="11" fill="#fff" /><rect x="22" y="6" width="2" height="5" fill="#fff" /></svg>
      <svg width="24" height="24" viewBox="0 0 24 24" fill="none" stroke="#ccc" strokeWidth="1" className="ml-[14px]"><path d="M1 22C2 10 9 3 22 1M5 22C6 13 12 7 22 5M9 22c.5-6 5-11 13-13" /><circle cx="17" cy="21" r="1.600" fill="#fff" stroke="none" /></svg>
      <svg width="24" height="24" viewBox="0 0 24 24" fill="none" stroke="#fff" strokeWidth="1" className="ml-[12px]"><path d="M1 9v6h4l6 6V3L5 9zM14 9c1.500 2 1.500 4 0 6M17 6c3 4 3 8 0 12M20 3c4 6 4 12 0 18" /></svg>
      <span className="ml-[15px] text-[18px] tracking-[-0.4px]">ENG</span>
      <div className="ml-[19px] flex flex-col items-center text-[18px] leading-[30px] tracking-[-0.1px]">
        <span>21:13</span>
        <span>15-12-2022</span>
      </div>
      <div className="relative ml-[27px] h-[36px] w-[26px]">
        <svg width="26" height="32" viewBox="0 0 26 32"><path d="M1 0h24v22H14l-6 8v-8H1z" fill="#fff" /><path d="M5 6h16M5 11h16M5 16h10" stroke="#282a4a" strokeWidth="1.500" /></svg>
        <span className="absolute -right-[11px] top-[14px] flex h-[24px] w-[24px] items-center justify-center rounded-full border border-[#9a9a9a] bg-[#3a3a3a] text-[15px] font-bold">5</span>
      </div>
      <span className="ml-auto mr-[6px] h-full w-px bg-[#5a5c78]" />
    </div>
  </footer>
);

export default function App() {
  return (
    <div className="flex h-[1080px] w-[1920px] flex-col overflow-hidden bg-[#f5f5f5] font-['Open_Sans','Noto_Sans',sans-serif]">
      <TopBar />
      <div className="flex min-h-0 flex-1">
        <Sidebar />
        <FeedPanel />
        <ChatPanel />
      </div>
      <Taskbar />
    </div>
  );
}
